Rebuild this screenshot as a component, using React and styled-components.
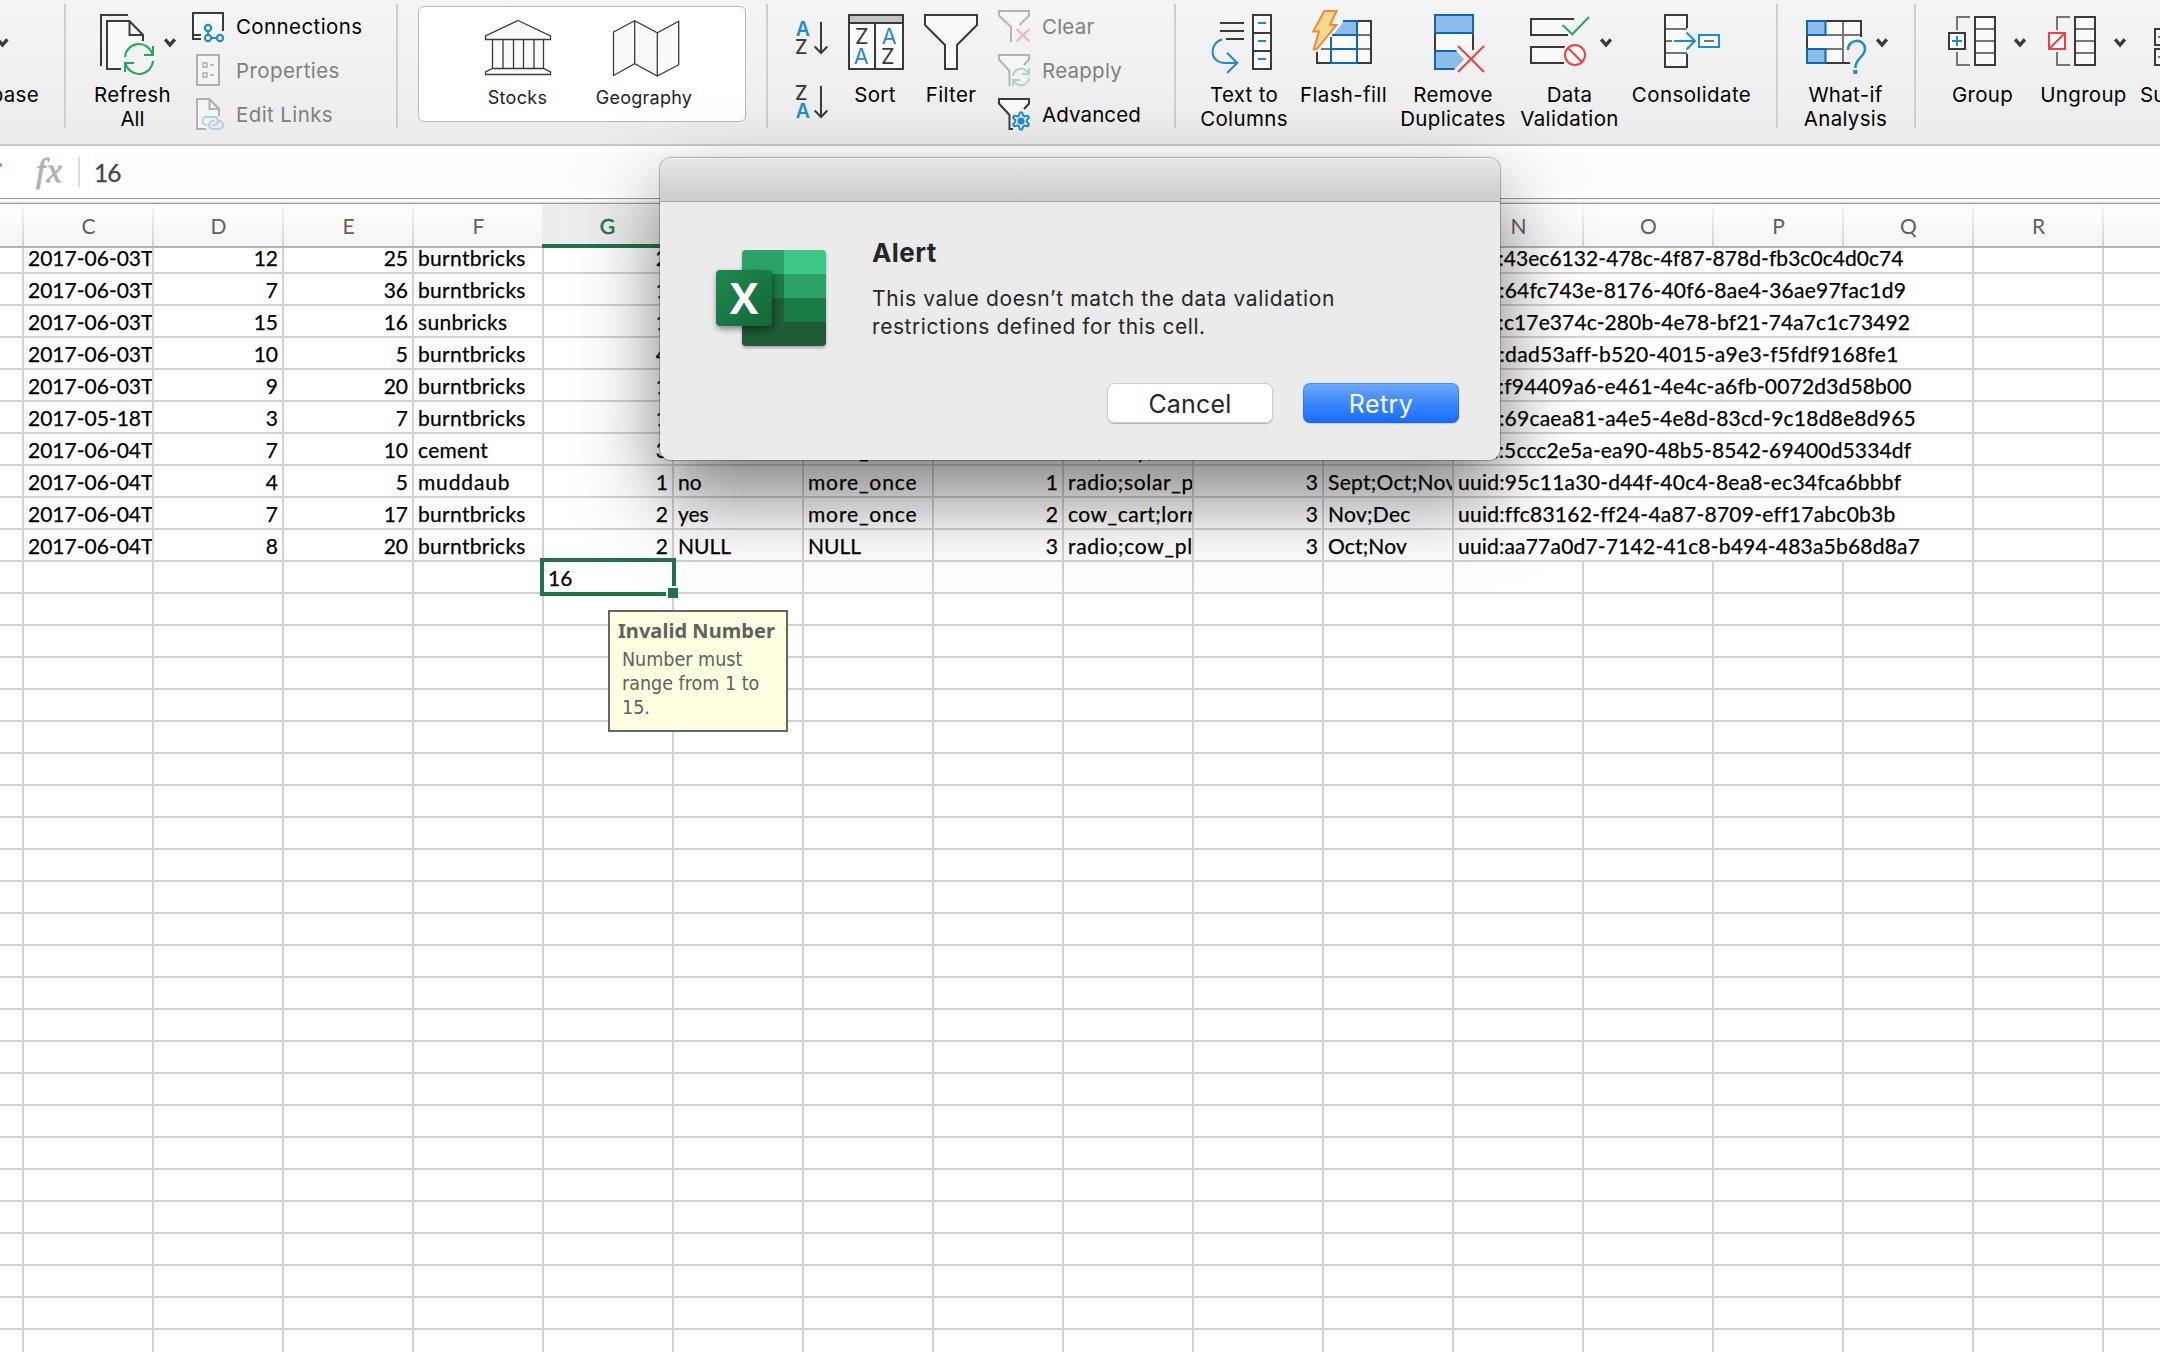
import React from "react";
import styled, { createGlobalStyle } from "styled-components";

const INK = "#3a3a3a";
const GREY = "#777772";
const BLUE = "#1f8bd0";
const NAVY = "#1066b4";
const SKY = "#8abdea";
const GREEN = "#26a956";
const RED = "#ef4044";
const PAPER = "#fafafa";
const EXCEL = "#217346";

const Global = createGlobalStyle`
  html, body { margin: 0; padding: 0; background: #fff; }
  * { box-sizing: border-box; }
`;

const Screen = styled.div`
  position: relative;
  width: 2160px;
  height: 1352px;
  overflow: hidden;
  background: #fff;
  display: flex;
  flex-direction: column;
`;

/* ---------- ribbon ---------- */
const Ribbon = styled.div`
  flex: none;
  display: flex;
  align-items: flex-start;
  height: 146px;
  border-bottom: 2px solid #c8c8c8;
  background: linear-gradient(#f4f4f4, #f1f1f1 45%, #ececec);
  font-family: Inter, "Liberation Sans", sans-serif;
  font-size: 20.5px;
  color: #000;
  overflow: hidden;
`;

const Divider = styled.div`
  flex: none;
  width: 2px;
  height: 124px;
  margin: 4px ${(p) => p.$right || 0}px 0 ${(p) => p.$left || 0}px;
  background: #cfcfcf;
`;

const BigButton = styled.div`
  flex: none;
  display: flex;
  flex-direction: column;
  width: ${(p) => p.$w}px;
  margin-left: ${(p) => p.$gap || 0}px;
`;

const Glyph = styled.svg`
  flex: none;
  display: block;
  overflow: visible;
  fill: none;
  stroke-width: ${(p) => p.$line || 2};
`;

const BigLabel = styled.div`
  display: flex;
  flex-direction: column;
  align-items: ${(p) => p.$align || "center"};
  line-height: 24px;
  white-space: nowrap;
`;

const Line = styled.span`
  letter-spacing: ${(p) => p.$ls || 0}px;
`;

const SmallList = styled.div`
  flex: none;
  display: flex;
  flex-direction: column;
  width: ${(p) => p.$w}px;
  padding-top: 5px;
  margin-left: ${(p) => p.$gap}px;
`;

const SmallRow = styled.div`
  display: flex;
  align-items: center;
  gap: 12px;
  height: 44px;
  line-height: 44px;
  white-space: nowrap;
  color: ${(p) => (p.$off ? "#808080" : "#000")};
`;

const TypeCard = styled.div`
  flex: none;
  display: flex;
  justify-content: flex-start;
  width: 328px;
  height: 116px;
  margin: 6px 20px 0;
  padding-left: 49px;
  border: 1px solid #b9b9b9;
  border-radius: 6px;
  background: #fff;
`;

const CardItem = styled.div`
  display: flex;
  flex-direction: column;
  align-items: center;
  width: ${(p) => p.$w}px;
  font-size: 18px;
  line-height: 22px;
  color: #222;
`;

const SortStack = styled.div`
  flex: none;
  width: 40px;
  margin-left: 22px;
`;

const Letter = styled.text`
  font-family: Inter, "Liberation Sans", sans-serif;
  font-size: ${(p) => p.$size}px;
  font-weight: ${(p) => p.$weight || 400};
  fill: ${(p) => p.$c};
  stroke: none;
`;

const Big = ({ x, w, gap, lines, align, children }) => (
  <BigButton $w={w} $gap={gap}>
    <Glyph width={w} height={83} viewBox={`${x} 0 ${w} 83`}>{children}</Glyph>
    <BigLabel $align={align}>
      {lines.map(([t, ls]) => <Line key={t} $ls={ls}>{t}</Line>)}
    </BigLabel>
  </BigButton>
);

const Small = ({ x, y, off, text, ls, children }) => (
  <SmallRow $off={off}>
    <Glyph width={32} height={44} viewBox={`${x} ${y} 32 44`}>{children}</Glyph>
    <Line $ls={ls}>{text}</Line>
  </SmallRow>
);

const Chevron = ({ x }) => (
  <path d={`M${x - 4.8} 39.4L${x} 45L${x + 4.8} 39.4`} stroke={INK} strokeWidth="3.4" />
);

const SortArrow = ({ y }) => (
  <path d={`M821 ${y}V${y + 31}M814.7 ${y + 24.5}L821 ${y + 31}L827.3 ${y + 24.5}`} stroke={INK} />
);

const GEAR = Array.from({ length: 24 }, (_, i) => {
  const r = i % 4 < 2 ? 8.6 : 5.8;
  const a = ((i * 15 - 7.5 - 90) * Math.PI) / 180;
  return `${(1021 + r * Math.cos(a)).toFixed(2)},${(121 + r * Math.sin(a)).toFixed(2)}`;
}).join(" ");

const OutlineColumn = ({ x }) => (
  <>
    <path d={`M${x - 4} 17H${x - 17}V30M${x - 17} 52V65H${x - 4}`} stroke={GREY} />
    <rect x={x + 1} y="17" width="20" height="48" fill={PAPER} stroke={INK} />
    <path d={`M${x + 2} 29H${x + 20}M${x + 2} 41H${x + 20}M${x + 2} 53H${x + 20}`} stroke={GREY} />
  </>
);

const RibbonBar = () => (
  <Ribbon>
    <Big x={0} w={39} lines={[["Database", 0.3]]} align="flex-end">
      <Chevron x={2.5} />
    </Big>
    <Divider $left={25} />
    <Big x={80} w={105} gap={14} lines={[["Refresh", 0.3], ["All", 0]]}>
      <path d="M128 15H101V66" stroke={INK} />
      <path d="M121 69H107V21H129.5L143 35V41L125 50Z" fill={PAPER} />
      <path d="M121 69H107V21H129.5L143 35V41M129.500 21V35H143" stroke={INK} />
      <circle cx="139" cy="59" r="17" fill="#f3f3f3" />
      <path d="M125 57A14 14 0 0 1 152.500 54.500M153 46V55H144M153 61A14 14 0 0 1 125.500 63.500M125 72V63H134" stroke={GREEN} />
      <Chevron x={170} />
    </Big>
    <SmallList $gap={7} $w={204}>
      <Small x={192} y={5} text="Connections" ls={0.4}>
        <path d="M201 39H193V13H223V31" stroke={INK} fill={PAPER} />
        <path d="M193 35H201" stroke={INK} />
        <circle cx="208" cy="27" r="7" fill="#f5f5f5" />
        <path d="M208 31V35M211 38H217" stroke={BLUE} />
        <g stroke={BLUE} strokeWidth="2.2" fill="#fff">
          <circle cx="208" cy="28" r="3.100" />
          <circle cx="208" cy="38" r="3.100" />
          <circle cx="220" cy="38" r="3.100" />
        </g>
      </Small>
      <Small x={192} y={49} off text="Properties" ls={0.4}>
        <rect x="197" y="55" width="22" height="30" stroke="#b0b0b0" fill="#f5f5f5" />
        <path d="M203 63H207V67H203ZM203 73H207V77H203Z" stroke="#bdbdbd" strokeWidth="1.8" />
        <path d="M210 65H214M210 75H214" stroke="#bdbdbd" strokeWidth="1.8" />
      </Small>
      <Small x={192} y={93} off text="Edit Links" ls={0.4}>
        <path d="M206 129H197V99H209.500L219 109V116" stroke="#b0b0b0" fill="#f5f5f5" />
        <path d="M209.500 99V109H219" stroke="#b0b0b0" />
        <path d="M207 125H206.500A4 4 0 0 1 206.500 117H214A4 4 0 0 1 214 125H212.500M218.500 121H219A4 4 0 0 1 219 129H213A4 4 0 0 1 213 121H214.500" stroke="#a9cfea" />
      </Small>
    </SmallList>
    <Divider />
    <TypeCard>
      <CardItem $w={99}>
        <Glyph width={99} height={80} viewBox="468 7 99 80" stroke={INK} $line={1.3}>
          <path fill={PAPER} d="M518 20.500L550.500 36V39.500H485.500V36ZM492.500 39.500H543.500V68.500H492.500ZM503 39.500V68.500M513.500 39.500V68.500M523.500 39.500V68.500M534 39.500V68.500M492.500 68.500H543.500L550.500 72V74.500H485.500V72Z" />
        </Glyph>
        <Line $ls={0.3}>Stocks</Line>
      </CardItem>
      <CardItem $w={154}>
        <Glyph width={154} height={80} viewBox="567 7 154 80" stroke={INK} $line={1.3}>
          <path fill={PAPER} d="M613.500 32L634.700 20.700L657.300 32.700L678.700 21.300V64.700L657.300 76L634.700 63.700L613.500 75.500ZM634.700 20.700V63.700M657.300 32.700V76" />
        </Glyph>
        <Line $ls={0.25}>Geography</Line>
      </CardItem>
    </TypeCard>
    <Divider />
    <SortStack>
      <Glyph width={40} height={124} viewBox="790 0 40 124">
        <Letter x="795.700" y="36" $size={19.5} $weight={600} $c={BLUE}>A</Letter>
        <Letter x="795" y="54" $size={19.5} $weight={500} $c={INK}>Z</Letter>
        <SortArrow y={22} />
        <Letter x="795" y="100" $size={19.5} $weight={500} $c={INK}>Z</Letter>
        <Letter x="795.700" y="118" $size={19.5} $weight={600} $c={BLUE}>A</Letter>
        <SortArrow y={86} />
      </Glyph>
    </SortStack>
    <Big x={835} w={80} gap={5} lines={[["Sort", 0.3]]}>
      <rect x="849" y="15" width="54" height="54" fill={PAPER} stroke={INK} />
      <rect x="850" y="16" width="52" height="6" fill="#c4c4c4" />
      <path d="M849 23H903M875 23V69" stroke={INK} />
      <Letter x="855" y="44" $size={21.5} $c={INK}>Z</Letter>
      <Letter x="853.700" y="64" $size={21.5} $c={BLUE}>A</Letter>
      <Letter x="881.700" y="44" $size={21.5} $c={BLUE}>A</Letter>
      <Letter x="881" y="64" $size={21.5} $c={INK}>Z</Letter>
    </Big>
    <Big x={915} w={72} lines={[["Filter", 0.35]]}>
      <path d="M925 15H977V25L957 45V69H945V45L925 25Z" fill={PAPER} stroke={INK} />
    </Big>
    <SmallList $gap={11} $w={176}>
      <Small x={998} y={5} off text="Clear" ls={0.2}>
        <path d="M1011 42V27L999 15.500V11H1029V15.500L1019.500 25" stroke="#b4b4b4" fill="#f6f6f6" />
        <path d="M1016.500 29L1029.500 41.500M1029.500 29L1016.500 41.500" stroke="#f4b3b3" />
      </Small>
      <Small x={998} y={49} off text="Reapply" ls={0.25}>
        <path d="M1009.500 86V71L999 59.500V55H1029V59.500L1024 65" stroke="#b4b4b4" fill="#f6f6f6" />
        <circle cx="1021" cy="77" r="9.500" fill="#f3f3f3" />
        <path d="M1013 76A8 8 0 0 1 1028 73M1029 68V74H1022M1029 78A8 8 0 0 1 1014 81M1013 86V80H1020" stroke="#a8d9b9" />
      </Small>
      <Small x={998} y={93} text="Advanced" ls={0.1}>
        <path d="M1013 129H1009.500V115L999 103.500V99H1029V103.500L1024 109" stroke={INK} fill={PAPER} />
        <circle cx="1021" cy="121" r="10" fill="#f0f0f0" />
        <polygon points={GEAR} stroke={BLUE} strokeWidth="2" fill="#eef4f9" strokeLinejoin="round" />
        <circle cx="1021" cy="121" r="2.600" stroke={BLUE} fill={BLUE} />
      </Small>
    </SmallList>
    <Divider />
    <Big x={1194} w={100} gap={18} lines={[["Text to", 0.3], ["Columns", 0.35]]}>
      <path d="M1220 23H1244M1220 31H1244M1226 39H1244" stroke={INK} />
      <path d="M1222 39.500C1209 43 1209 63 1225 63H1237M1227 52.700L1237.300 63L1227 73" stroke={BLUE} />
      <rect x="1253" y="15" width="18" height="54" fill={PAPER} stroke={INK} />
      <path d="M1253 33H1271M1253 51H1271" stroke={INK} />
      <path d="M1258 23H1266M1258 41H1266M1258 59H1266" stroke={BLUE} />
    </Big>
    <Big x={1294} w={99} lines={[["Flash-fill", 0.35]]}>
      <path d="M1333 21H1371V63H1317V52L1321 49Z" fill={PAPER} />
      <path d="M1357 35H1371M1357 49H1371M1321 49H1331" stroke={GREY} />
      <path d="M1357 21H1371V63H1317V52" stroke={INK} />
      <path d="M1344 21H1357V35H1333Z" fill={SKY} />
      <path d="M1343 21H1357V63H1331V37M1332 35H1357M1331 49H1357" stroke={NAVY} />
      <path d="M1324.300 11H1336.500L1330 25H1336.500L1316.500 49.300H1313.800L1319 31.500H1313.300Z" fill="#f9d98c" stroke="#ef8a3a" />
    </Big>
    <Big x={1395} w={116} gap={2} lines={[["Remove", 0.3], ["Duplicates", 0.35]]}>
      <path d="M1435 33H1473V50L1462 57L1457 51H1435Z" fill={PAPER} />
      <path d="M1435 33V51M1473 33V50" stroke={INK} />
      <rect x="1435" y="15" width="38" height="18" fill={SKY} stroke={NAVY} />
      <path d="M1435 51H1456.500L1464 59.500L1454.500 69H1435Z" fill={SKY} />
      <path d="M1456.500 51H1435V69H1454.500" stroke={NAVY} />
      <path d="M1458 46L1484 72M1484 46L1458 72" stroke={RED} />
    </Big>
    <Big x={1513} w={113} gap={2} lines={[["Data", 0.2], ["Validation", 0.4]]}>
      <path d="M1574 19H1531V35H1568M1565 47H1531V63H1564" stroke={INK} fill={PAPER} />
      <circle cx="1575" cy="55" r="13" fill="#f2f2f2" />
      <path d="M1562.500 25L1572.300 34.300L1589 17" stroke={GREEN} />
      <circle cx="1575" cy="55" r="10" stroke={RED} fill={PAPER} />
      <path d="M1568 48L1582 62" stroke={RED} />
      <Chevron x={1606} />
    </Big>
    <Big x={1626} w={131} lines={[["Consolidate", 0.4]]}>
      <rect x="1665" y="15" width="22" height="52" fill={PAPER} />
      <path d="M1665 29H1687M1665 53H1687M1665 41H1672" stroke={GREY} />
      <path d="M1687 28V15H1665V67H1687V54" stroke={INK} />
      <path d="M1674 41H1695M1686.500 32.500L1695 41L1686.500 49.500" stroke={BLUE} />
      <rect x="1699" y="35" width="20" height="12" fill={PAPER} stroke={BLUE} />
      <path d="M1704 41H1714" stroke={GREY} />
    </Big>
    <Divider $left={19} />
    <Big x={1795} w={101} gap={17} lines={[["What-if", 0.3], ["Analysis", 0.3]]}>
      <path d="M1807 21H1861V37L1846 50V63H1807Z" fill={PAPER} />
      <path d="M1826 35H1861M1826 49H1843M1843 21V63" stroke={GREY} />
      <path d="M1807 21H1861V37M1807 21V63H1850" stroke={INK} />
      <path d="M1807 21H1825.500V35H1807ZM1807 49H1825.500V63H1807Z" fill={SKY} stroke={NAVY} />
      <path d="M1848 50C1848 38 1865 38 1865 49C1865 57 1855.300 58 1855.300 68" stroke={BLUE} strokeWidth="2.500" />
      <rect x="1853.300" y="70" width="4" height="4" fill={BLUE} />
      <Chevron x={1882} />
    </Big>
    <Divider $left={18} />
    <Big x={1933} w={99} gap={17} lines={[["Group", 0.3]]}>
      <OutlineColumn x={1974} />
      <rect x="1949" y="33" width="16" height="16" fill="#fff" stroke={INK} />
      <path d="M1952 41H1962M1957 36V46" stroke={BLUE} />
      <Chevron x={2020} />
    </Big>
    <Big x={2034} w={99} gap={2} lines={[["Ungroup", 0.3]]}>
      <OutlineColumn x={2074} />
      <rect x="2049" y="33" width="16" height="16" fill="#fff" stroke={RED} />
      <path d="M2050 48L2064 34" stroke={RED} />
      <Chevron x={2120} />
    </Big>
    <Big x={2140} w={80} gap={7} lines={[["Subtotal", 0.2]]} align="flex-start">
      <path d="M2155 29H2173V45H2155ZM2155 49H2173V65H2155Z" fill="#fff" stroke={INK} />
      <path d="M2158 37H2170M2158 57H2170" stroke={BLUE} />
    </Big>
  </Ribbon>
);

/* ---------- formula bar ---------- */
const FormulaBar = styled.div`
  flex: none;
  display: flex;
  align-items: center;
  height: 52px;
  background: #fff;
`;

const TickEnd = styled.div`
  width: 2px;
  height: 4px;
  margin-top: -14px;
  border-radius: 0 2px 2px 0;
  background: #5cb85a;
`;

const Fx = styled.div`
  width: 42px;
  margin-left: 34px;
  margin-top: -2px;
  font: italic 34px/40px "Liberation Serif", serif;
  letter-spacing: 1.2px;
  color: #b0b0b0;
  -webkit-text-stroke: 0.8px #b0b0b0;
`;

const FormulaRule = styled.div`
  width: 2px;
  height: 30px;
  background: #dcdcdc;
`;

const FormulaInput = styled.div`
  flex: 1;
  height: 38px;
  margin-left: 14px;
  background: #fdfdfd;
  font: 24.5px/40px Lato, "Liberation Sans", sans-serif;
  letter-spacing: -0.9px;
  color: #444;
  -webkit-text-stroke: 0.25px #444;
`;

const Splitter = styled.div`
  flex: none;
  height: 6px;
  border: solid #999;
  border-width: 1px 0;
  background: linear-gradient(#f0f0f0, #fff 40%, #d6d6d6);
`;

/* ---------- sheet ---------- */
const Sheet = styled.div`
  position: relative;
  flex: 1;
  min-height: 0;
  display: flex;
  flex-direction: column;
  font-family: Lato, "Liberation Sans", sans-serif;
  font-size: 21px;
`;

const gridColumns = `
  display: grid;
  grid-template-columns: 24px repeat(17, 130px);
  width: 2234px;
`;

const HeaderRow = styled.div`
  ${gridColumns}
  flex: none;
  height: 44px;
`;

const HeaderCell = styled.div`
  height: 44px;
  display: flex;
  justify-content: center;
  line-height: 44px;
  padding-right: 1px;
  color: ${(p) => (p.$active ? EXCEL : "#5f5f5f")};
  border-bottom: 2px solid #b4b4b4;
  background:
    linear-gradient(#f8f8f8, #d2d2d2) right / 2px 100% no-repeat,
    ${(p) => (p.$active ? "#ededed" : "linear-gradient(#fefefe, #f5f5f5)")};
  ${(p) => p.$active && `
    -webkit-text-stroke: 0.5px currentColor;
    border-bottom: 4px solid ${EXCEL};
    margin-left: -2px;
  `}
`;

const RowsClip = styled.div`
  flex: 1;
  min-height: 0;
  overflow: hidden;
`;

const Rows = styled.div`
  margin-top: -6px;
`;

const Row = styled.div`
  ${gridColumns}
  height: 32px;
`;

const Cell = styled.div`
  grid-column: span ${(p) => p.$span || 1};
  height: 32px;
  line-height: 32px;
  padding: 0 4px;
  overflow: hidden;
  white-space: nowrap;
  text-align: ${(p) => (p.$num ? "right" : "left")};
  letter-spacing: ${(p) => p.$ls || 0}px;
  color: #000;
  -webkit-text-stroke: 0.25px #000;
  border-right: 2px solid #d2d2d2;
  border-bottom: 2px solid #d2d2d2;
`;

const EditBox = styled.div`
  position: absolute;
  left: 540px;
  top: 354px;
  width: 136px;
  height: 38px;
  padding-left: 4px;
  border: 4px solid ${EXCEL};
  background: #fff;
  line-height: 32px;
  -webkit-text-stroke: 0.25px #000;
`;

const FillHandle = styled.div`
  position: absolute;
  right: -6px;
  bottom: -6px;
  width: 12px;
  height: 12px;
  border: solid #fff;
  border-width: 2px 0 0 2px;
  background: ${EXCEL};
`;

const Tooltip = styled.div`
  position: absolute;
  left: 608px;
  top: 406px;
  width: 180px;
  height: 122px;
  padding: 5px 0 0 8px;
  border: 2px solid #666;
  background: #ffffe1;
  font-size: 20px;
  line-height: 24px;
  white-space: nowrap;
  color: #606060;
`;

const TipTitle = styled.div`
  font-family: "Noto Sans", sans-serif;
  font-weight: 700;
  line-height: 28px;
  letter-spacing: 0.05px;
  margin-bottom: 3px;
`;

const TipLine = styled.div`
  margin-left: 4px;
  font-family: "DejaVu Sans Condensed", "DejaVu Sans", sans-serif;
  font-stretch: condensed;
  font-size: 19.5px;
`;

const COLS = "CDEFGHIJKLMNOPQRS".split("");
const NUMERIC = new Set(["D", "E", "G", "J", "L"]);
const TRACKING = {
  burntbricks: 0.3,
  sunbricks: 0.3,
  cement: 0.3,
  muddaub: 0.85,
  more_once: 0.85,
  "radio;solar_panel": 0.65,
  "radio;cow_plough": 0.7,
  "cow_cart;lorry": 0.5,
  "car;lorry;": 0.3,
  "Nov;Dec": 0.3,
  "Oct;Nov": 0.15,
  "Sept;Oct;Nov": 0.3,
};

/* letter spacing of the id column, row by row */
const ID_TRACKING = [0.05, 0.24, 0.1, 0.33, 0.16, 0.23, 0.13, 0.24, 0.26, 0.2];

const DATA = [
  ["2017-06-03T", 12, 25, "burntbricks", 2, "", "", "", "", "", "", "uuid:43ec6132-478c-4f87-878d-fb3c0c4d0c74"],
  ["2017-06-03T", 7, 36, "burntbricks", 1, "", "", "", "", "", "", "uuid:64fc743e-8176-40f6-8ae4-36ae97fac1d9"],
  ["2017-06-03T", 15, 16, "sunbricks", 1, "", "", "", "", "", "", "uuid:c17e374c-280b-4e78-bf21-74a7c1c73492"],
  ["2017-06-03T", 10, 5, "burntbricks", 4, "", "", "", "", "", "", "uuid:dad53aff-b520-4015-a9e3-f5fdf9168fe1"],
  ["2017-06-03T", 9, 20, "burntbricks", 1, "", "", "", "", "", "", "uuid:f94409a6-e461-4e4c-a6fb-0072d3d58b00"],
  ["2017-05-18T", 3, 7, "burntbricks", 1, "", "", "", "", "", "", "uuid:69caea81-a4e5-4e8d-83cd-9c18d8e8d965"],
  ["2017-06-04T", 7, 10, "cement", 3, "", "more_once", "", "car;lorry;", "", "", "uuid:5ccc2e5a-ea90-48b5-8542-69400d5334df"],
  ["2017-06-04T", 4, 5, "muddaub", 1, "no", "more_once", 1, "radio;solar_panel", 3, "Sept;Oct;Nov", "uuid:95c11a30-d44f-40c4-8ea8-ec34fca6bbbf"],
  ["2017-06-04T", 7, 17, "burntbricks", 2, "yes", "more_once", 2, "cow_cart;lorry", 3, "Nov;Dec", "uuid:ffc83162-ff24-4a87-8709-eff17abc0b3b"],
  ["2017-06-04T", 8, 20, "burntbricks", 2, "NULL", "NULL", 3, "radio;cow_plough", 3, "Oct;Nov", "uuid:aa77a0d7-7142-41c8-b494-483a5b68d8a7"],
];
const EMPTY_ROWS = 25;

const SheetView = () => (
  <Sheet>
    <HeaderRow>
      <HeaderCell />
      {COLS.map((c) => <HeaderCell key={c} $active={c === "G"}>{c === "S" ? "" : c}</HeaderCell>)}
    </HeaderRow>
    <RowsClip>
      <Rows>
        {DATA.map((r, i) => (
          <Row key={i}>
            <Cell />
            {r.map((v, j) => (
              <Cell
                key={j}
                $num={NUMERIC.has(COLS[j])}
                $span={COLS[j] === "N" ? 4 : 1}
                $ls={COLS[j] === "N" ? ID_TRACKING[i] : TRACKING[v]}
              >
                {v}
              </Cell>
            ))}
            <Cell />
            <Cell />
          </Row>
        ))}
        {Array.from({ length: EMPTY_ROWS }, (_, i) => (
          <Row key={i}>
            <Cell />
            {COLS.map((c) => <Cell key={c} />)}
          </Row>
        ))}
      </Rows>
    </RowsClip>
    <EditBox>16<FillHandle /></EditBox>
    <Tooltip>
      <TipTitle>Invalid Number</TipTitle>
      <TipLine>Number must</TipLine>
      <TipLine>range from 1 to</TipLine>
      <TipLine>15.</TipLine>
    </Tooltip>
  </Sheet>
);

/* ---------- alert ---------- */
const Dialog = styled.div`
  position: absolute;
  left: 660px;
  top: 158px;
  width: 840px;
  height: 302px;
  display: flex;
  flex-direction: column;
  border-radius: 11px;
  overflow: hidden;
  background: #ebebeb;
  box-shadow: 0 0 1px 1px rgba(0, 0, 0, 0.28), 0 36px 80px rgba(0, 0, 0, 0.5);
`;

const TitleBar = styled.div`
  flex: none;
  height: 44px;
  border-bottom: 1px solid #a6a6a6;
  background: linear-gradient(#e6e6e6, #cdcdcd);
  box-shadow: inset 0 1px 0 #f3f3f3;
`;

const DialogBody = styled.div`
  display: flex;
  padding: 48px 41px 0 56px;
`;

const AppIcon = styled.div`
  flex: none;
  position: relative;
  width: 110px;
  height: 96px;
  padding-left: 26px;
`;

const IconSheet = styled.div`
  display: grid;
  grid-template-columns: 42px 42px;
  grid-auto-rows: 24px;
  width: 84px;
  height: 96px;
  border-radius: 4px;
  overflow: hidden;
  box-shadow: 0 2px 3px rgba(0, 0, 0, 0.3);
`;

const Swatch = styled.div`
  background: ${(p) => p.$c};
`;

const IconBadge = styled.div`
  position: absolute;
  left: 0;
  top: 20px;
  width: 56px;
  height: 56px;
  border-radius: 4px;
  background: linear-gradient(135deg, #20894f, #136738);
  box-shadow: 1px 3px 6px rgba(0, 0, 0, 0.45);
  font: 700 43px/56px "Open Sans", sans-serif;
  text-align: center;
  color: #fff;
`;

const Message = styled.div`
  flex: 1;
  margin-left: 46px;
  font-family: Inter, "Liberation Sans", sans-serif;
  color: #262626;
`;

const AlertTitle = styled.div`
  margin-top: -13px;
  font-size: 26px;
  font-weight: 700;
  line-height: 32px;
  letter-spacing: 0.4px;
`;

const AlertText = styled.div`
  font-size: 21px;
  line-height: 28px;
  letter-spacing: ${(p) => p.$ls}px;
  white-space: nowrap;
  margin-top: ${(p) => p.$top || 0}px;
`;

const Actions = styled.div`
  display: flex;
  justify-content: flex-end;
  gap: 30px;
  margin-top: 42px;
`;

const Button = styled.div`
  width: ${(p) => p.$w}px;
  height: 40px;
  border-radius: 7px;
  text-align: center;
  font-size: 25px;
  line-height: 42px;
  letter-spacing: ${(p) => p.$ls}px;
  color: ${(p) => (p.$primary ? "#fff" : "#262626")};
  background: ${(p) => (p.$primary ? "linear-gradient(#6fa9f9, #3d88fb 50%, #156bfe)" : "#fff")};
  box-shadow: ${(p) => p.$primary
    ? "inset 0 0 0 1px rgba(20,95,230,.35), 0 1px 1px rgba(0,0,0,.15)"
    : "inset 0 0 0 1px #cdcdcd, 0 1px 1px rgba(0,0,0,.25)"};
`;

const SWATCHES = ["#2ba367", "#3fc585", "#1b7b45", "#2ba367", "#1d5a37", "#1b7b45", "#1d5a37", "#1d5a37"];

const Alert = () => (
  <Dialog>
    <TitleBar />
    <DialogBody>
      <AppIcon>
        <IconSheet>{SWATCHES.map((c, i) => <Swatch key={i} $c={c} />)}</IconSheet>
        <IconBadge>X</IconBadge>
      </AppIcon>
      <Message>
        <AlertTitle>Alert</AlertTitle>
        <AlertText $top={16} $ls={0.62}>This value doesn’t match the data validation</AlertText>
        <AlertText $ls={0.57}>restrictions defined for this cell.</AlertText>
        <Actions>
          <Button $w={166} $ls={0.2}>Cancel</Button>
          <Button $w={156} $ls={0.4} $primary>Retry</Button>
        </Actions>
      </Message>
    </DialogBody>
  </Dialog>
);

export default function App() {
  return (
    <>
      <Global />
      <Screen>
        <RibbonBar />
        <FormulaBar>
          <TickEnd />
          <Fx>fx</Fx>
          <FormulaRule />
          <FormulaInput>16</FormulaInput>
        </FormulaBar>
        <Splitter />
        <SheetView />
        <Alert />
      </Screen>
    </>
  );
}
